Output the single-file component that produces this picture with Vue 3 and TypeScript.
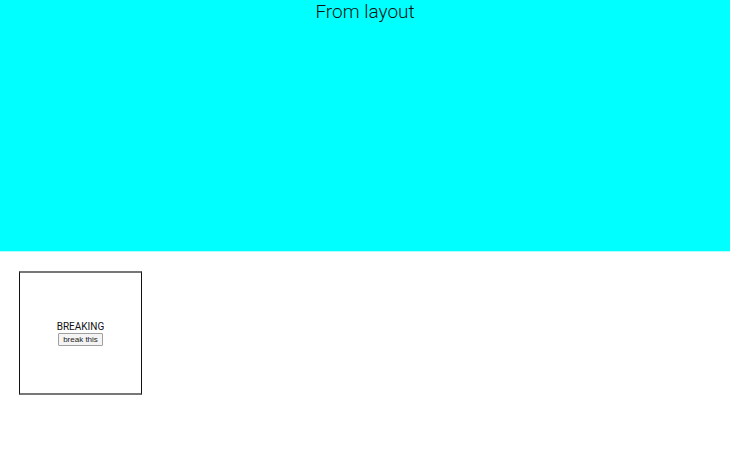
<script setup lang="ts">
import { ref } from 'vue'

const title = ref<string>('From layout')
const broken = ref<boolean>(false)

function breakThis(): void {
  broken.value = true
}
</script>

<template>
  <div class="layout">
    <header class="banner">
      <h1 class="title">{{ title }}</h1>
    </header>
    <main class="content">
      <section class="card">
        <span class="label">BREAKING</span>
        <button class="action" type="button" @click="breakThis">break this</button>
      </section>
    </main>
  </div>
</template>

<style>
body {
  margin: 0;
  background: #fff;
}
</style>

<style scoped>
.layout {
  display: flex;
  flex-direction: column;
  min-height: 100vh;
  font-family: Roboto, sans-serif;
  color: #111;
}

.banner {
  min-height: 251px;
  border-bottom: 1px solid #b0ffff;
  background: #0ff;
  background-clip: padding-box;
  text-align: center;
}

.title {
  margin: 0;
  font-size: 19px;
  line-height: 24px;
  font-weight: 300;
}

.content {
  padding: 19px;
}

.card {
  box-sizing: border-box;
  display: flex;
  flex-direction: column;
  align-items: center;
  justify-content: center;
  width: 123px;
  min-height: 124px;
  border: solid;
  border-width: 2px 1px;
  border-color: #777 #111;
}

.label {
  font-size: 10px;
  line-height: 12px;
}

.action {
  box-sizing: border-box;
  padding: 0 4px;
  border: 1px solid #a0a0a0;
  border-radius: 1px;
  background: #f4f4f4;
  color: #222;
  font-family: "Liberation Sans", Arial, sans-serif;
  font-size: 8px;
  line-height: 11px;
}
</style>
